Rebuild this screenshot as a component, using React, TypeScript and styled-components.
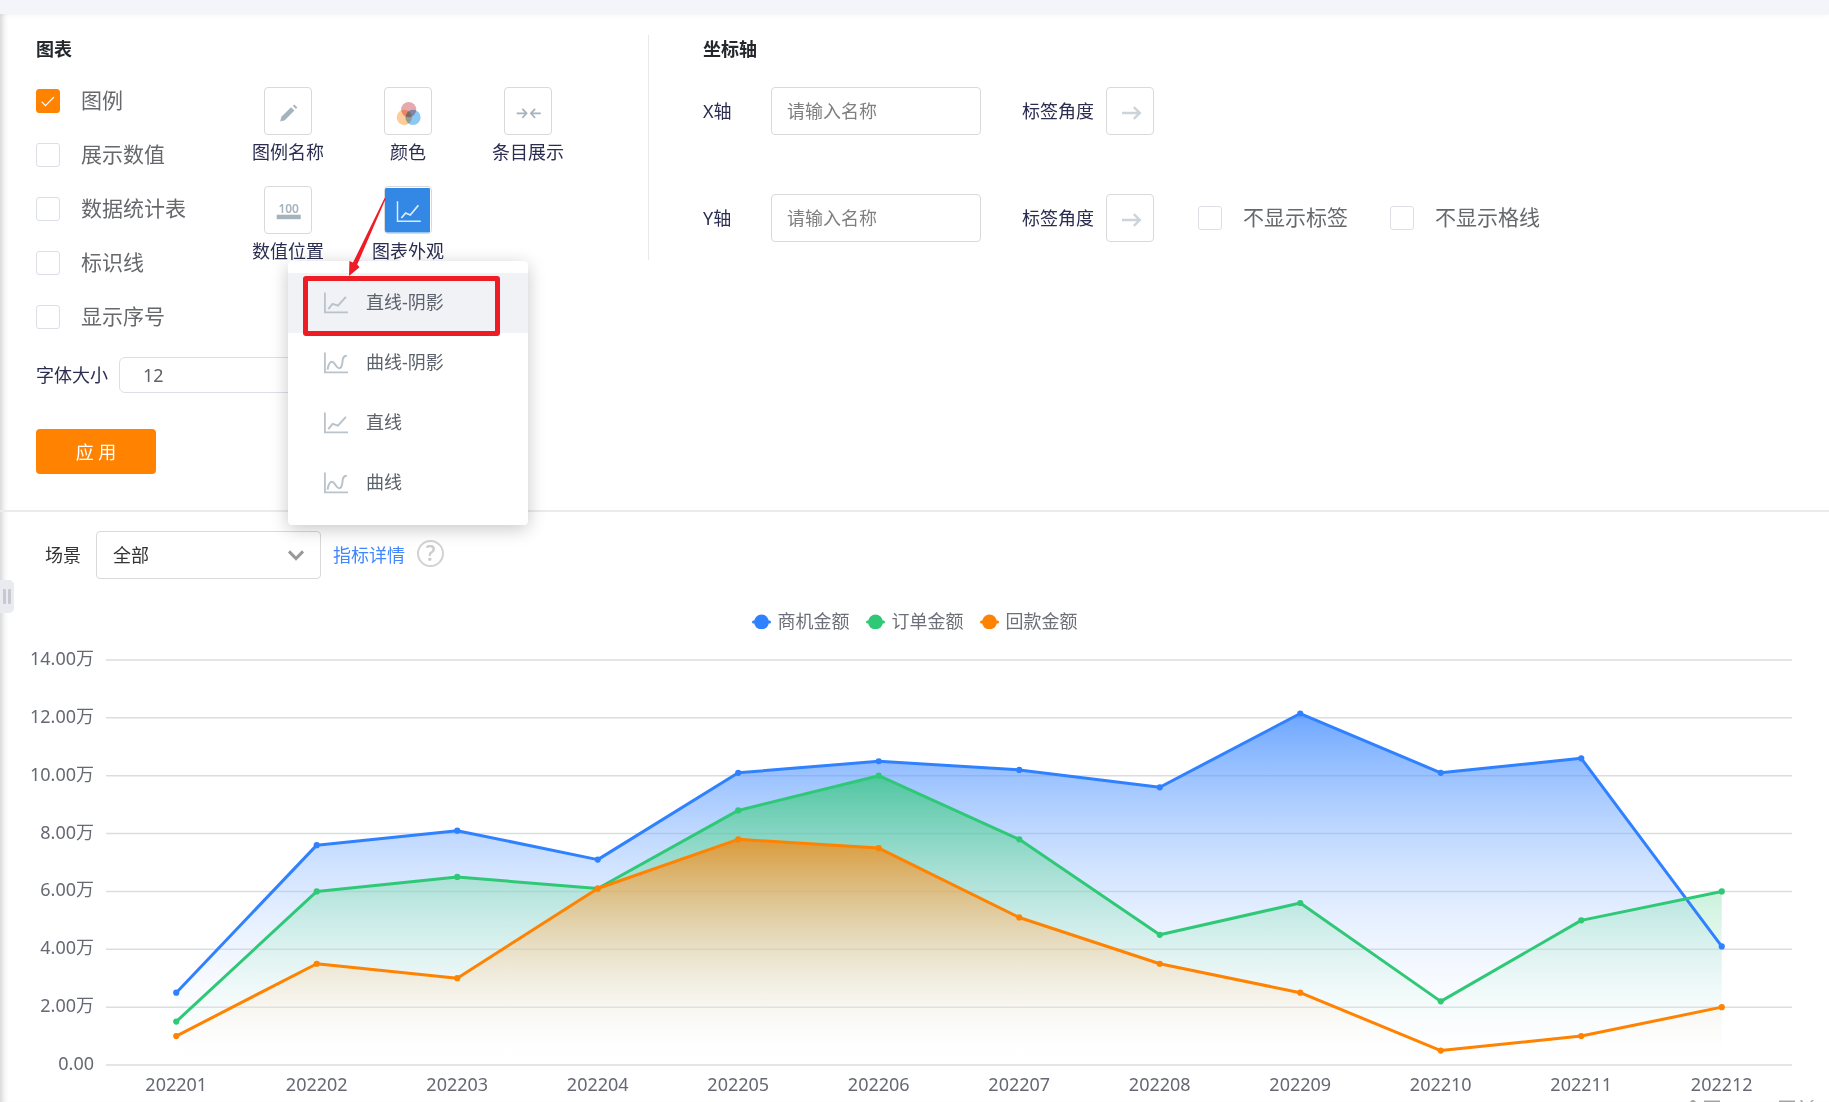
import React, { useLayoutEffect, useRef, useState } from 'react';
import styled, { createGlobalStyle, css } from 'styled-components';

const GlobalStyle = createGlobalStyle`
  *, *::before, *::after { box-sizing: border-box; }
  body {
    margin: 0;
    background: #fff;
    color: #2a2d50;
    font-family: "Noto Sans", "Noto Sans CJK SC", sans-serif;
    font-size: 18px;
    line-height: 28px;
  }
  button, input, select { font: inherit; }
`;

/* ---------- page shell ---------- */

const Page = styled.div`
  display: flex;
  flex-direction: column;
  min-height: 100vh;
  overflow: hidden;
`;

const TopBar = styled.div`
  height: 14px;
  background: #f4f5fa;
  box-shadow: 0 0 6px rgba(0, 0, 0, 0.06);
`;

const Content = styled.main`
  flex: 1;
  box-shadow: inset 7px 0 6px -5px rgba(0, 0, 0, 0.2);
`;

const ConfigPanel = styled.section`
  display: flex;
  align-items: flex-start;
  padding: 21px 36px 36px;
  border-bottom: 2px solid #ebebec;
`;

const ChartSettings = styled.div`
  flex: 0 0 612px;
`;

const AxisSettings = styled.div`
  flex: 1;
  min-height: 225px;
  padding-left: 54px;
  border-left: 1px solid #e8e8e8;
`;

const Heading = styled.h2`
  margin: 0;
  font-size: 18px;
  font-weight: 700;
  line-height: 28px;
  color: #24282c;
`;

const SettingsBody = styled.div`
  display: flex;
`;

/* ---------- checkboxes ---------- */

const CheckList = styled.div`
  display: flex;
  flex-direction: column;
  gap: 30px;
  width: 192px;
  padding-top: 26px;
`;

const CheckLabel = styled.label`
  display: flex;
  align-items: center;
  gap: 21px;
  height: 24px;
  font-size: 21px;
  color: #66686c;
  white-space: nowrap;
`;

const CheckText = styled.span`
  padding-bottom: 2px;
`;

const CheckBox = styled.span`
  position: relative;
  display: block;
  width: 24px;
  height: 24px;

  svg {
    position: absolute;
    inset: 0;
    pointer-events: none;
    opacity: 0;
  }

  input:checked + svg { opacity: 1; }
`;

const CheckInput = styled.input`
  appearance: none;
  display: block;
  width: 24px;
  height: 24px;
  margin: 0;
  border: 1px solid #dcdfe6;
  border-radius: 3px;
  background: #fff;

  &:checked {
    border-color: #ff8200;
    background: #ff8200;
  }
`;

function Check({ label, checked = false }: { label: string; checked?: boolean }) {
  return (
    <CheckLabel>
      <CheckBox>
        <CheckInput type="checkbox" defaultChecked={checked} />
        <svg width="24" height="24" viewBox="0 0 24 24" fill="none" stroke="#fff" strokeWidth="1.2">
          <path d="M5.7 12.6 9.4 16.6 18 8" />
        </svg>
      </CheckBox>
      <CheckText>{label}</CheckText>
    </CheckLabel>
  );
}

/* ---------- tool buttons ---------- */

const ToolGrid = styled.div`
  display: grid;
  grid-template-columns: repeat(3, 120px);
  grid-auto-rows: 84px;
  align-content: start;
  row-gap: 15px;
  padding-top: 24px;
`;

const Tool = styled.div`
  position: relative;
  display: flex;
  flex-direction: column;
  align-items: center;
`;

const ToolLabel = styled.label`
  line-height: 34px;
`;

const SquareButton = styled.button`
  width: 48px;
  height: 48px;
  padding: 0;
  border: 1px solid #d9d9d9;
  border-radius: 4px;
  background: #fff;
  overflow: hidden;

  svg { display: block; }
`;

const Blend = styled.circle`
  mix-blend-mode: multiply;
`;

const Digits = styled.text`
  font: 600 12px "Noto Sans", sans-serif;
  fill: #a5b3bd;
`;

function ToolIcon({ children }: { children: React.ReactNode }) {
  return (
    <svg width="46" height="46" viewBox="1 1 46 46" fill="none" stroke="#a5b3bd">
      {children}
    </svg>
  );
}

const PencilIcon = () => (
  <ToolIcon>
    <path d="M16.2 34.6 17.4 29.8 27 20.2 30.4 23.6 20.8 33.2Z" fill="#a5b3bd" stroke="none" />
    <path d="M30.4 20.4 31.8 19" strokeWidth="4.4" strokeLinecap="butt" />
  </ToolIcon>
);

const ColorIcon = () => (
  <ToolIcon>
    <g stroke="none">
      <Blend cx="24.7" cy="22.6" r="7.6" fill="#e6a9ae" />
      <Blend cx="20.3" cy="30.4" r="7.6" fill="#ffcb99" />
      <Blend cx="29" cy="30.4" r="7.6" fill="#8cc8f4" />
    </g>
  </ToolIcon>
);

const CollapseIcon = () => (
  <ToolIcon>
    <path d="M12.7 26.3H22.4M18.4 21.8 22.6 26.3 18.4 30.8M36.8 26.3H27.1M31.1 21.8 26.9 26.3 31.1 30.8" strokeWidth="1.7" />
  </ToolIcon>
);

const ValueIcon = () => (
  <ToolIcon>
    <Digits x="24.7" y="27" textAnchor="middle" stroke="none">100</Digits>
    <rect x="12.7" y="28.7" width="24" height="4.5" fill="#a5b3bd" stroke="none" />
  </ToolIcon>
);

const AppearanceIcon = () => (
  <ToolIcon>
    <rect x="1" y="2" width="45" height="44.6" rx="1" fill="#3388e5" stroke="none" />
    <path d="M13.5 15.2V35.3H36.8" stroke="#dcebfb" strokeWidth="1.5" />
    <path d="M17.4 32 21.6 27 26.3 29 34.4 19.2" stroke="#dcebfb" strokeWidth="1.8" />
  </ToolIcon>
);

const AngleIcon = () => (
  <ToolIcon>
    <path d="M16 26H33.4M27.8 20.2 33.8 26 27.8 31.8" stroke="#cbd4da" strokeWidth="2.4" />
  </ToolIcon>
);

/* ---------- appearance menu ---------- */

const Menu = styled.ul`
  position: absolute;
  z-index: 2;
  top: 75px;
  left: 50%;
  width: 240px;
  margin: 0 0 0 -120px;
  padding: 12px 0;
  list-style: none;
  border-radius: 4px;
  background: #fff;
  box-shadow: 0 4px 18px rgba(0, 0, 0, 0.22);

  &::before {
    content: "";
    position: absolute;
    top: -8px;
    left: 50%;
    margin-left: -9px;
    border: 9px solid transparent;
    border-top: 0;
    border-bottom: 8px solid #fff;
  }
`;

const MenuButton = styled.button<{ $active?: boolean }>`
  display: flex;
  align-items: center;
  gap: 18px;
  width: 100%;
  height: 60px;
  padding: 0 36px;
  border: 0;
  background: ${(p) => (p.$active ? '#f1f2f6' : 'transparent')};
  color: #5c626b;
  text-align: left;
`;

const MenuText = styled.span`
  padding-bottom: 2px;
`;

function LineIcon({ curved }: { curved?: boolean }) {
  return (
    <svg width="24" height="24" viewBox="0 0 24 24" fill="none" stroke="#b9c3cb" strokeWidth="2">
      <path d="M.9 1.5V21.4H24" strokeWidth="1.8" />
      {curved ? (
        <path d="M3.6 18.6C4.4 13.6 6 10.6 8.2 10.8C11.2 11.2 12 17.2 15 17.2C18.6 17.2 18.2 12.4 18.6 9.4C19 6 20 4.8 22.8 4.8" />
      ) : (
        <path d="M4.3 18.2 8.6 12.8 14 14.6 21.9 5.9" />
      )}
    </svg>
  );
}

const MENU = [
  { label: '直线-阴影', curved: false },
  { label: '曲线-阴影', curved: true },
  { label: '直线', curved: false },
  { label: '曲线', curved: true },
];

/* ---------- red callout over the menu ---------- */

const CalloutBox = styled.li`
  position: absolute;
  top: 15px;
  left: 15px;
  width: 197px;
  height: 60px;
  border: 5px solid #ee1c25;
  border-radius: 3px;
  pointer-events: none;
`;

const CalloutArrow = styled.svg`
  position: absolute;
  z-index: 3;
  top: 10px;
  left: 0;
  pointer-events: none;
`;

/* ---------- form fields ---------- */

const FontSizeRow = styled.div`
  display: flex;
  align-items: center;
  gap: 11px;
  margin-top: 28px;
`;

const FontSizeInput = styled.input`
  width: 200px;
  height: 36px;
  padding: 0 23px;
  border: 1px solid #dcdfe6;
  border-radius: 6px;
  background: #fff;
  color: #606266;
`;

const ApplyButton = styled.button`
  display: block;
  width: 120px;
  height: 45px;
  margin-top: 36px;
  border: 0;
  border-radius: 4px;
  background: #ff8200;
  color: #fff;
`;

const AxisRows = styled.div`
  display: flex;
  flex-direction: column;
  gap: 59px;
  padding-top: 24px;
`;

const AxisRow = styled.div`
  display: flex;
  align-items: center;
  height: 48px;
`;

const AxisLabel = styled.label`
  width: 68px;
`;

const AxisInput = styled.input`
  width: 210px;
  height: 48px;
  margin-right: 41px;
  padding: 0 15px;
  border: 1px solid #d9d9d9;
  border-radius: 4px;
  color: #333;

  &::placeholder { color: #7f7f7f; opacity: 1; }
`;

const AngleLabel = styled.label`
  margin-right: 12px;
`;

const AxisChecks = styled.div`
  display: flex;
  gap: 42px;
  padding-left: 44px;
`;

function Axis({ name, children }: { name: string; children?: React.ReactNode }) {
  return (
    <AxisRow>
      <AxisLabel htmlFor={`${name}-name`}>{name}轴</AxisLabel>
      <AxisInput id={`${name}-name`} type="text" placeholder="请输入名称" />
      <AngleLabel htmlFor={`${name}-angle`}>标签角度</AngleLabel>
      <SquareButton id={`${name}-angle`} type="button">
        <AngleIcon />
      </SquareButton>
      {children}
    </AxisRow>
  );
}

/* ---------- scene bar ---------- */

const ChartSection = styled.section`
  position: relative;
`;

const SceneBar = styled.div`
  display: flex;
  align-items: center;
  padding: 19px 45px 0;
  color: #333;
`;

const SelectBox = styled.span`
  position: relative;
  margin: 0 12px 0 15px;

  svg {
    position: absolute;
    top: 18px;
    right: 16px;
    pointer-events: none;
  }
`;

const SceneSelect = styled.select`
  appearance: none;
  display: block;
  width: 225px;
  height: 48px;
  padding: 0 16px;
  border: 1px solid #d9d9d9;
  border-radius: 4px;
  background: #fff;
  color: #333;
`;

const DetailLink = styled.a`
  color: #4286ff;
  text-decoration: none;
`;

const HelpButton = styled.button`
  width: 27px;
  height: 27px;
  margin: 0 0 3px 12px;
  padding: 0;
  border: 2px solid #d2d2d2;
  border-radius: 50%;
  background: transparent;
  color: #ccc;
  font-size: 21px;
  font-weight: 600;
  line-height: 23px;
`;

const CollapseHandle = styled.button`
  position: absolute;
  top: 68px;
  left: 0;
  display: flex;
  align-items: center;
  justify-content: center;
  gap: 2px;
  width: 14px;
  height: 33px;
  padding: 0;
  border: 0;
  border-radius: 0 5px 5px 0;
  background: #e9ebf0;

  &::before, &::after {
    content: "";
    width: 3px;
    height: 15px;
    border-radius: 1px;
    background: #c6c9d2;
  }
`;

/* ---------- chart ---------- */

const Legend = styled.ul`
  display: flex;
  justify-content: center;
  gap: 16px;
  margin: 30px 0 0;
  padding: 0;
  list-style: none;
  line-height: 24px;
  color: #6e7079;
`;

const LegendItem = styled.li`
  display: flex;
  align-items: center;
  gap: 7px;
`;

const ChartBox = styled.div`
  svg { display: block; }
`;

const axisText = css`
  font: 18px "Noto Sans", "Noto Sans CJK SC", sans-serif;
  fill: #666973;
`;

const AxisText = styled.text`
  ${axisText}
`;

const SERIES = [
  { name: '商机金额', color: '#2f81ff', data: [2.5, 7.6, 8.1, 7.1, 10.1, 10.5, 10.2, 9.6, 12.15, 10.1, 10.6, 4.1] },
  { name: '订单金额', color: '#2fc877', data: [1.5, 6, 6.5, 6.1, 8.8, 10, 7.8, 4.5, 5.6, 2.2, 5, 6] },
  { name: '回款金额', color: '#ff8200', data: [1, 3.5, 3, 6.1, 7.8, 7.5, 5.1, 3.5, 2.5, 0.5, 1, 2] },
];

const MONTHS = Array.from({ length: 12 }, (_, i) => String(202201 + i));
const TICKS = [0, 2, 4, 6, 8, 10, 12, 14];
const HEIGHT = 469;
const LEFT = 106;
const RIGHT = 37;
const TOP = 27;
const BOTTOM = 432;

function AreaChart() {
  const box = useRef<HTMLDivElement>(null);
  const [width, setWidth] = useState(window.innerWidth);

  useLayoutEffect(() => {
    const el = box.current;
    if (!el) return;
    const measure = () => setWidth(el.clientWidth);
    measure();
    const observer = new ResizeObserver(measure);
    observer.observe(el);
    return () => observer.disconnect();
  }, []);

  const step = (width - LEFT - RIGHT) / MONTHS.length;
  const x = (i: number) => LEFT + step * (i + 0.5);
  const y = (v: number) => BOTTOM - (v / 14) * (BOTTOM - TOP);

  return (
    <ChartBox ref={box}>
      <svg width={width} height={HEIGHT} role="img" aria-label="金额趋势">
        <defs>
          {SERIES.map((s, i) => (
            <linearGradient key={s.name} id={`fill-${i}`} x1="0" y1="0" x2="0" y2="1">
              <stop offset="0" stopColor={s.color} stopOpacity="1" />
              <stop offset="1" stopColor="#fff" stopOpacity="0" />
            </linearGradient>
          ))}
        </defs>
        {TICKS.map((t) => (
          <g key={t}>
            <line x1={LEFT} x2={width - RIGHT} y1={y(t)} y2={y(t)} stroke="#dcdddf" strokeWidth="1.5" />
            <AxisText x={LEFT - 12} y={y(t) + 5} textAnchor="end">
              {t === 0 ? '0.00' : `${t.toFixed(2)}万`}
            </AxisText>
          </g>
        ))}
        {MONTHS.map((m, i) => (
          <AxisText key={m} x={x(i)} y={BOTTOM + 26} textAnchor="middle">{m}</AxisText>
        ))}
        {SERIES.map((s, k) => {
          const points = s.data.map((v, i) => `${x(i)},${y(v)}`).join(' ');
          return (
            <polygon
              key={s.name}
              points={`${x(0)},${y(0)} ${points} ${x(11)},${y(0)}`}
              fill={`url(#fill-${k})`}
              fillOpacity="0.7"
            />
          );
        })}
        {SERIES.map((s) => (
          <g key={s.name}>
            <polyline
              points={s.data.map((v, i) => `${x(i)},${y(v)}`).join(' ')}
              fill="none"
              stroke={s.color}
              strokeWidth="3"
              strokeLinejoin="bevel"
            />
            {s.data.map((v, i) => (
              <circle key={i} cx={x(i)} cy={y(v)} r="3.1" fill={s.color} />
            ))}
          </g>
        ))}
        <g transform={`translate(${width - 139} ${HEIGHT - 2})`} fill="#a5a5a5">
          <path d="M0 2 2 0H4L6 2ZM14 .6H30V2H14ZM89 .6H105V2H89ZM110 .4 112 0 113 2H111ZM122 0H124L122 2H120Z" />
        </g>
      </svg>
    </ChartBox>
  );
}

export default function App() {
  return (
    <Page>
      <GlobalStyle />
      <TopBar />
      <Content>
        <ConfigPanel>
          <ChartSettings>
            <Heading>图表</Heading>
            <SettingsBody>
              <CheckList>
                <Check label="图例" checked />
                <Check label="展示数值" />
                <Check label="数据统计表" />
                <Check label="标识线" />
                <Check label="显示序号" />
              </CheckList>
              <ToolGrid>
                <Tool>
                  <SquareButton id="tool-legend" type="button"><PencilIcon /></SquareButton>
                  <ToolLabel htmlFor="tool-legend">图例名称</ToolLabel>
                </Tool>
                <Tool>
                  <SquareButton id="tool-color" type="button"><ColorIcon /></SquareButton>
                  <ToolLabel htmlFor="tool-color">颜色</ToolLabel>
                </Tool>
                <Tool>
                  <SquareButton id="tool-items" type="button"><CollapseIcon /></SquareButton>
                  <ToolLabel htmlFor="tool-items">条目展示</ToolLabel>
                </Tool>
                <Tool>
                  <SquareButton id="tool-value" type="button"><ValueIcon /></SquareButton>
                  <ToolLabel htmlFor="tool-value">数值位置</ToolLabel>
                </Tool>
                <Tool>
                  <SquareButton id="tool-look" type="button" aria-expanded="true"><AppearanceIcon /></SquareButton>
                  <ToolLabel htmlFor="tool-look">图表外观</ToolLabel>
                  <Menu>
                    {MENU.map((m, i) => (
                      <li key={m.label}>
                        <MenuButton type="button" $active={i === 0}>
                          <LineIcon curved={m.curved} />
                          <MenuText>{m.label}</MenuText>
                        </MenuButton>
                      </li>
                    ))}
                    <CalloutBox aria-hidden="true" />
                  </Menu>
                  <CalloutArrow width="44" height="84" viewBox="0 0 44 84" fill="#ee1c25" aria-hidden="true">
                    <path d="M36.6 2 37.8 2.6 9.2 68.6 11.5 71.2 1 80 1.4 65 5 66.6Z" />
                  </CalloutArrow>
                </Tool>
              </ToolGrid>
            </SettingsBody>
            <FontSizeRow>
              <label htmlFor="font-size">字体大小</label>
              <FontSizeInput id="font-size" type="text" defaultValue="12" />
            </FontSizeRow>
            <ApplyButton type="button">应 用</ApplyButton>
          </ChartSettings>
          <AxisSettings>
            <Heading>坐标轴</Heading>
            <AxisRows>
              <Axis name="X" />
              <Axis name="Y">
                <AxisChecks>
                  <Check label="不显示标签" />
                  <Check label="不显示格线" />
                </AxisChecks>
              </Axis>
            </AxisRows>
          </AxisSettings>
        </ConfigPanel>
        <ChartSection>
          <SceneBar>
            <label htmlFor="scene">场景</label>
            <SelectBox>
              <SceneSelect id="scene" defaultValue="all">
                <option value="all">全部</option>
              </SceneSelect>
              <svg width="18" height="14" viewBox="0 0 18 14" fill="none" stroke="#999" strokeWidth="3">
                <path d="M2 2.4 9 9.6 16 2.4" />
              </svg>
            </SelectBox>
            <DetailLink href="#detail">指标详情</DetailLink>
            <HelpButton type="button" aria-label="帮助">?</HelpButton>
          </SceneBar>
          <CollapseHandle type="button" aria-label="收起" />
          <Legend>
            {SERIES.map((s) => (
              <LegendItem key={s.name}>
                <svg width="19" height="16" viewBox="0 0 19 16" fill={s.color}>
                  <circle cx="9.5" cy="9" r="7.4" />
                  <rect x="0" y="7.5" width="19" height="3" rx="1.5" />
                </svg>
                {s.name}
              </LegendItem>
            ))}
          </Legend>
          <AreaChart />
        </ChartSection>
      </Content>
    </Page>
  );
}
